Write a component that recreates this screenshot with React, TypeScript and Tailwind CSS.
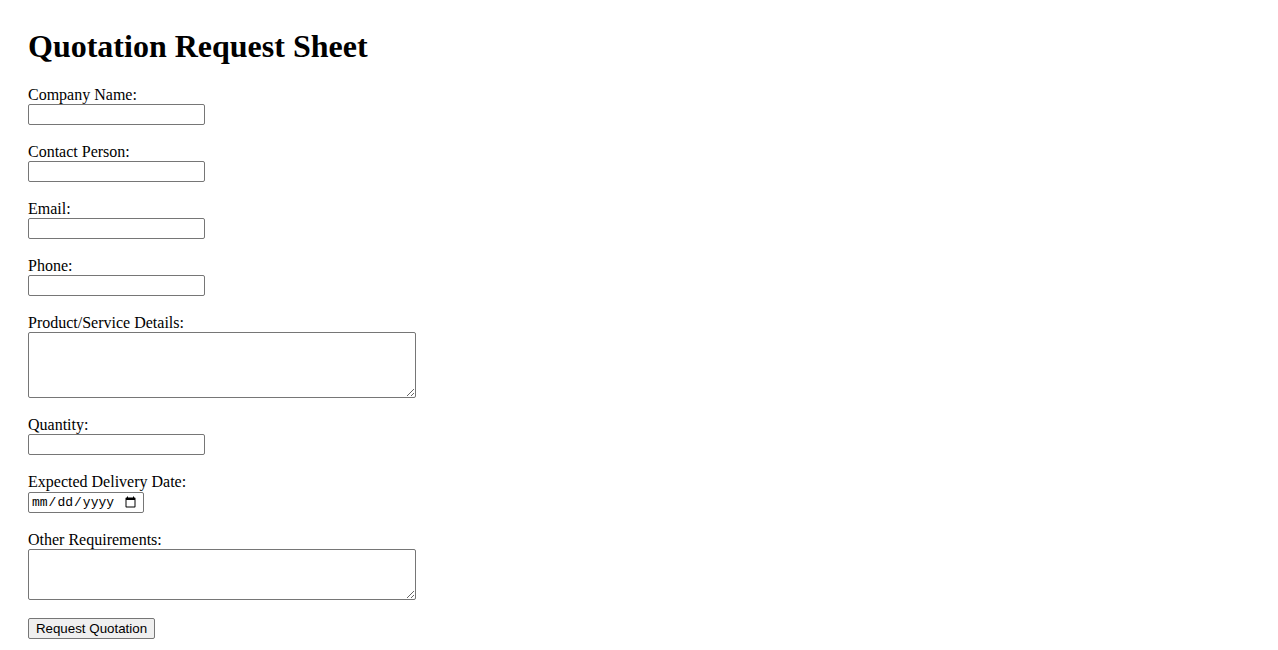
import React from 'react';

const inputCls =
  'block h-[21px] w-[177px] border border-[#767676] rounded-[2px] bg-white px-[2px] text-[13px] font-["Liberation_Sans",sans-serif]';
const areaCls =
  'block w-[388px] border border-[#767676] rounded-[2px] bg-white px-[2px] text-[13px] font-["Liberation_Mono",monospace] resize';

const Label: React.FC<{ text: string; htmlFor: string; className?: string }> = ({ text, htmlFor, className }) => (
  <label htmlFor={htmlFor} className={`block h-[19px] leading-[19px] ${className ?? ''}`}>
    {text}
  </label>
);

const App: React.FC = () => {
  return (
    <div className="min-h-screen bg-white pl-[28px] pt-[28px] text-[16px] text-black font-['Liberation_Serif',serif]">
      <h1 className="text-[32px] leading-[37px] font-bold">Quotation Request Sheet</h1>

      <form className="mt-[20px] flex flex-col items-start" onSubmit={(e) => e.preventDefault()}>
        <Label htmlFor="company" text="Company Name:" />
        <input id="company" type="text" className={inputCls} />

        <Label htmlFor="contact" text="Contact Person:" className="mt-[17px]" />
        <input id="contact" type="text" className={inputCls} />

        <Label htmlFor="email" text="Email:" className="mt-[17px]" />
        <input id="email" type="email" className={inputCls} />

        <Label htmlFor="phone" text="Phone:" className="mt-[17px]" />
        <input id="phone" type="tel" className={inputCls} />

        <Label htmlFor="details" text="Product/Service Details:" className="mt-[17px]" />
        <textarea id="details" className={`${areaCls} h-[66px]`} />

        <Label htmlFor="qty" text="Quantity:" className="mt-[17px]" />
        <input id="qty" type="number" className={inputCls} />

        <Label htmlFor="date" text="Expected Delivery Date:" className="mt-[17px]" />
        <input
          id="date"
          type="date"
          className="mt-[1px] block h-[21px] w-[116px] border border-[#767676] rounded-[2px] bg-white pl-[2px] pr-[4px] text-[13px] font-['Liberation_Mono',monospace]"
        />

        <Label htmlFor="other" text="Other Requirements:" className="mt-[17px]" />
        <textarea id="other" className={`${areaCls} h-[51px]`} />

        <button
          type="submit"
          className="mt-[18px] block h-[21px] w-[127px] border border-[#767676] rounded-[2px] bg-[#efefef] px-[6px] text-[13.33px] leading-[19px] text-black font-['Liberation_Sans',sans-serif]"
        >
          Request Quotation
        </button>
      </form>
    </div>
  );
};

export default App;
